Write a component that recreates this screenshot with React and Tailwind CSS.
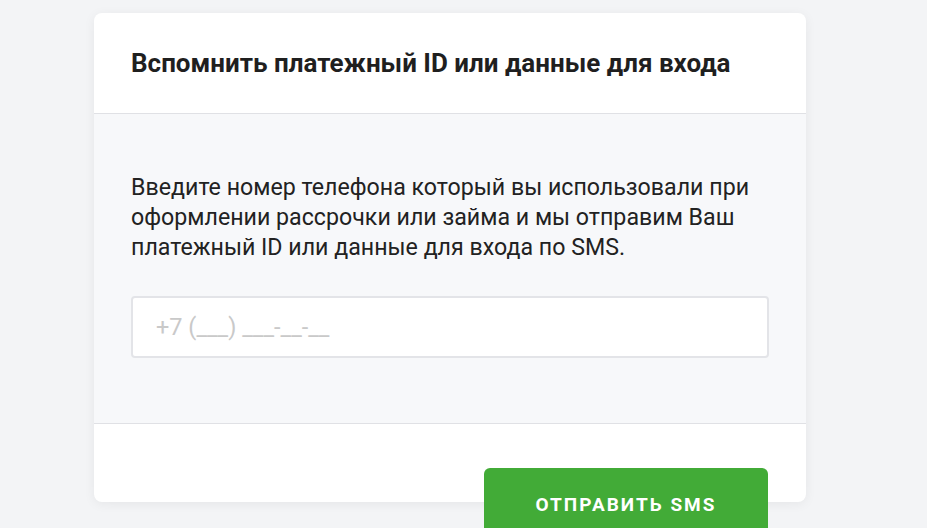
export default function App() {
  return (
    <div
      className="min-h-screen bg-[#f3f4f6] pt-[13px] pl-[94px] overflow-hidden h-[528px]"
      style={{ fontFamily: 'Roboto, "Liberation Sans", sans-serif' }}
    >
      <div className="w-[712px] rounded-lg bg-white shadow-[0_2px_12px_rgba(0,0,0,0.06)]">
        <div className="h-[101px] flex items-center px-[37px] border-b border-[#e0e1e5]">
          <h2 className="text-[26px] font-bold text-[#1f1f1f] leading-none">
            Вспомнить платежный ID или данные для входа
          </h2>
        </div>
        <div className="bg-[#f7f8fa] px-[37px] pt-[58px] pb-[65px] border-b border-[#e0e1e5]">
          <p className="text-[23.2px] leading-[30px] text-[#222]">
            Введите номер телефона который вы использовали при оформлении рассрочки или займа и мы отправим Ваш платежный ID или данные для входа по SMS.
          </p>
          <input
            type="text"
            placeholder="+7 (___) ___-__-__"
            className="mt-[34px] block w-full h-[62px] rounded-[4px] border-2 border-[#e3e4e8] bg-white px-[23px] text-[23.5px] text-[#222] placeholder:text-[#c9c9c9] outline-none"
          />
        </div>
        <div className="h-[78px] rounded-b-lg pt-[44px] flex justify-end pr-[38px]">
          <button className="w-[284px] h-[74px] shrink-0 rounded-md bg-[#42ab37] text-white text-[19px] font-bold tracking-[2px] uppercase flex items-start justify-center pt-[24px] leading-[26px]">
            Отправить SMS
          </button>
        </div>
      </div>
    </div>
  );
}
